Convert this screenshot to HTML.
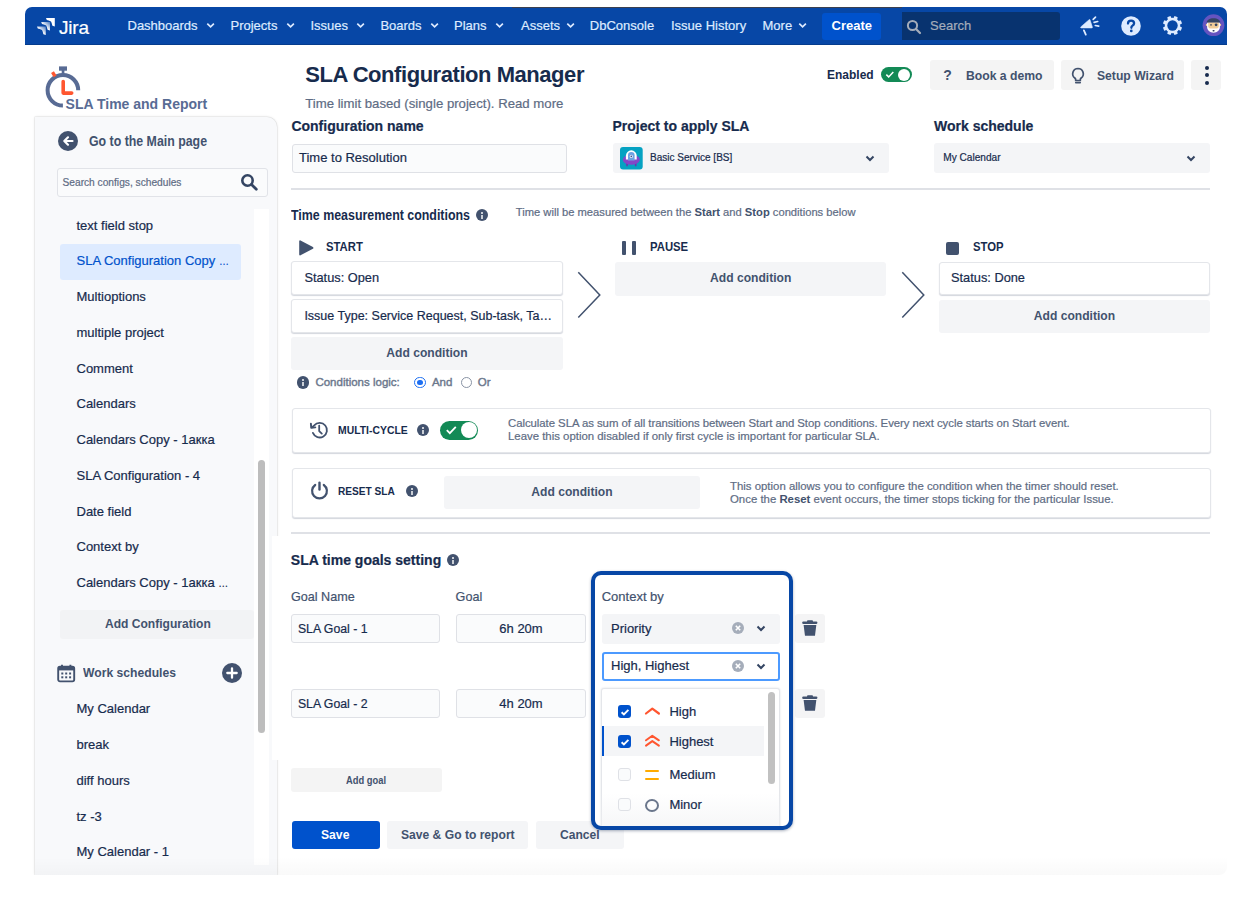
<!DOCTYPE html>
<html><head><meta charset="utf-8">
<style>
*{box-sizing:border-box;margin:0;padding:0}
html,body{width:1255px;height:901px;overflow:hidden;background:#fff}
body{position:relative;font-family:"Liberation Sans",sans-serif;color:#172B4D}
.a{position:absolute}
.t{position:absolute;line-height:1;white-space:nowrap;-webkit-text-stroke:.2px currentColor}
b,.t[style*="bold"]{-webkit-text-stroke:0}
.nav{color:#DEEBFF;font-size:13px;top:19.3px}
.chev{position:absolute;top:22px}
.si{font-size:13px;color:#172B4D;left:76.5px}
.btn{position:absolute;background:#F4F5F7;border-radius:3px}
.card{position:absolute;background:#fff;border:1px solid #E4E6EA;border-radius:3px;box-shadow:0 1px 1px rgba(9,30,66,.18)}
.lbl{font-weight:bold;font-size:14px;color:#172B4D}
.info{position:absolute;width:12px;height:12px;border-radius:50%;background:#42526E}
.info:after{content:"";position:absolute;left:5.3px;top:5.4px;width:1.6px;height:4px;background:rgba(255,255,255,.72)}
.info:before{content:"";position:absolute;left:5.3px;top:3px;width:1.6px;height:1.5px;background:rgba(255,255,255,.72)}
</style></head><body>

<!-- HEADER -->
<div class="a" style="left:25px;top:7px;width:1202px;height:38px;background:#0747A6;border-radius:7px 7px 0 0;box-shadow:inset 0 -1px 0 rgba(0,0,0,.15)"></div>
<div class="a" style="left:512px;top:7px;width:390px;height:1px;background:#3b4150"></div>
<svg class="a" style="left:34px;top:14px" width="24" height="24" viewBox="34 14 24 24">
  <defs><linearGradient id="jg" gradientUnits="objectBoundingBox" x1="1" y1="0" x2="0" y2="1"><stop offset="0" stop-color="#fff" stop-opacity=".25"/><stop offset=".55" stop-color="#fff" stop-opacity="1"/><stop offset="1" stop-color="#fff"/></linearGradient></defs>
  <path d="M46 18H54.8V26.5L52.4 25.7Q51.6 22.4 51 21.4Q48.5 20.6 46.8 20.1z" fill="#fff"/>
  <path d="M41.2 22H50V30.5L47.6 29.7Q46.8 26.4 46.2 25.4Q43.7 24.6 42 24.1z" fill="url(#jg)"/>
  <path d="M37 26.5H45.8V35L43.4 34.2Q42.6 30.9 42 29.9Q39.5 29.1 37.8 28.6z" fill="url(#jg)"/>
</svg>
<div class="t" style="left:59px;top:17.5px;font-size:19px;color:#fff;letter-spacing:-.2px">Jira</div>

<div class="t nav" style="left:127.5px">Dashboards</div>
<div class="t nav" style="left:230.5px">Projects</div>
<div class="t nav" style="left:310.4px">Issues</div>
<div class="t nav" style="left:380.4px">Boards</div>
<div class="t nav" style="left:454px">Plans</div>
<div class="t nav" style="left:521px">Assets</div>
<div class="t nav" style="left:589.8px">DbConsole</div>
<div class="t nav" style="left:671px">Issue History</div>
<div class="t nav" style="left:762.5px">More</div>
<svg class="chev" style="left:206px" width="9" height="7"><path d="M1.3 1.7l3.3 3.2 3.3-3.2" stroke="#DEEBFF" stroke-width="1.7" fill="none"/></svg>
<svg class="chev" style="left:285.5px" width="9" height="7"><path d="M1.3 1.7l3.3 3.2 3.3-3.2" stroke="#DEEBFF" stroke-width="1.7" fill="none"/></svg>
<svg class="chev" style="left:355.5px" width="9" height="7"><path d="M1.3 1.7l3.3 3.2 3.3-3.2" stroke="#DEEBFF" stroke-width="1.7" fill="none"/></svg>
<svg class="chev" style="left:429.5px" width="9" height="7"><path d="M1.3 1.7l3.3 3.2 3.3-3.2" stroke="#DEEBFF" stroke-width="1.7" fill="none"/></svg>
<svg class="chev" style="left:494.5px" width="9" height="7"><path d="M1.3 1.7l3.3 3.2 3.3-3.2" stroke="#DEEBFF" stroke-width="1.7" fill="none"/></svg>
<svg class="chev" style="left:565.5px" width="9" height="7"><path d="M1.3 1.7l3.3 3.2 3.3-3.2" stroke="#DEEBFF" stroke-width="1.7" fill="none"/></svg>
<svg class="chev" style="left:797.5px" width="9" height="7"><path d="M1.3 1.7l3.3 3.2 3.3-3.2" stroke="#DEEBFF" stroke-width="1.7" fill="none"/></svg>

<div class="a" style="left:822px;top:13px;width:59px;height:27px;background:#0052CC;border-radius:3px"></div>
<div class="t" style="left:831.5px;top:18.6px;font-size:13px;font-weight:bold;color:#fff">Create</div>
<div class="a" style="left:902px;top:12px;width:158px;height:28px;background:#08336F;border-radius:0 3px 3px 0"></div>
<svg class="a" style="left:906px;top:19px" width="16" height="16" viewBox="0 0 16 16"><circle cx="6.5" cy="6.5" r="4.6" stroke="#A5ADBA" stroke-width="2" fill="none"/><path d="M10 10l4 4" stroke="#A5ADBA" stroke-width="2.2" stroke-linecap="round"/></svg>
<div class="t" style="left:930px;top:19.3px;font-size:13px;color:#A5ADBA">Search</div>

<!-- megaphone -->
<svg class="a" style="left:1075px;top:12px" width="30" height="28" viewBox="1075 12 30 28">
  <path d="M1080.8 26.9L1089.3 19.6Q1089.8 19.2 1090 19.8L1092.4 27.2Q1092.5 27.9 1091.8 27.9H1081.2Q1080.2 27.6 1080.8 26.9z" fill="#DEEBFF" stroke="#DEEBFF" stroke-width=".6"/>
  <path d="M1083.9 30.4l1.9 4.2" stroke="#DEEBFF" stroke-width="1.8" stroke-linecap="round"/>
  <path d="M1093.2 19.4l2.3-2.3M1094.1 22.3l3.6-.8M1095.3 25.5l3.4.6" stroke="#DEEBFF" stroke-width="1.7" stroke-linecap="round"/>
</svg>
<!-- help -->
<svg class="a" style="left:1121px;top:16px" width="20" height="20" viewBox="0 0 20 20">
  <circle cx="10" cy="10" r="9.8" fill="#DEEBFF"/>
  <path d="M7 7.6c0-1.8 1.4-3 3.1-3s3 1.1 3 2.7c0 1.4-.9 2-1.8 2.6-.6.4-.9.7-.9 1.5v.4" stroke="#0747A6" stroke-width="2.3" fill="none" stroke-linecap="round"/>
  <circle cx="10.3" cy="14.9" r="1.35" fill="#0747A6"/>
</svg>
<!-- gear -->
<svg class="a" style="left:1161.9px;top:15.3px" width="21" height="21" viewBox="0 0 21 21">
  <g fill="#DEEBFF">
    <rect x="8.6" y="0.9" width="3.8" height="19.2" rx=".8" transform="rotate(22.5 10.5 10.5)"/>
    <rect x="8.6" y="0.9" width="3.8" height="19.2" rx=".8" transform="rotate(67.5 10.5 10.5)"/>
    <rect x="8.6" y="0.9" width="3.8" height="19.2" rx=".8" transform="rotate(112.5 10.5 10.5)"/>
    <rect x="8.6" y="0.9" width="3.8" height="19.2" rx=".8" transform="rotate(157.5 10.5 10.5)"/>
    <circle cx="10.5" cy="10.5" r="7.7"/>
  </g>
  <circle cx="10.5" cy="10.5" r="5.2" fill="#0747A6"/>
</svg>
<!-- avatar -->
<svg class="a" style="left:1202px;top:14px" width="23" height="23" viewBox="0 0 23 23">
  <circle cx="11.5" cy="11.2" r="10.9" fill="#6554C0"/>
  <circle cx="4.9" cy="10.9" r="1.1" fill="#F1CC98"/><circle cx="18.1" cy="10.9" r="1.1" fill="#F1CC98"/>
  <path d="M5.1 8.6h12.8v4.4c0 3.4-2.9 5.7-6.4 5.7s-6.4-2.3-6.4-5.7z" fill="#fff"/>
  <path d="M6.2 8.3h10.6v3.6c0 1.8-1.4 2.7-2.6 2.7h-5.4c-1.2 0-2.6-.9-2.6-2.7z" fill="#F1CC98"/>
  <path d="M4.6 8.6c0-2.5 3.1-4.4 6.9-4.4s6.9 1.9 6.9 4.4z" fill="#344563"/>
  <circle cx="9" cy="10.9" r=".8" fill="#344563"/>
  <circle cx="14.1" cy="10.8" r="1.4" fill="#344563"/>
  <rect x="10.6" y="15.9" width="1.9" height="1.5" rx=".4" fill="#344563"/>
</svg>

<!-- bottom faint shadow of main content -->


<!-- SIDEBAR -->
<svg class="a" style="left:44px;top:65px" width="40" height="45" viewBox="44 65 40 45">
  <path d="M78.2 90.3A15.3 15.3 0 1 0 62.9 105.6" stroke="#586B94" stroke-width="4" fill="none"/>
  <rect x="59" y="66.4" width="8" height="4.3" fill="#586B94"/>
  <rect x="61.7" y="70" width="2.7" height="4" fill="#586B94"/>
  <path d="M52.5 72.2l2.6 4.2" stroke="#FF5630" stroke-width="3.4"/>
  <path d="M63.2 81.5v11.6h8.5" stroke="#FF5630" stroke-width="3.6" fill="none" stroke-linecap="round" stroke-linejoin="round"/>
</svg>
<div class="t" style="left:65.6px;top:97.2px;font-size:14px;font-weight:bold;color:#586B94">SLA Time and Report</div>

<div class="a" style="left:35.3px;top:116.7px;width:242px;height:758.3px;background:#F8F9FB;border-radius:0 10px 0 0;box-shadow:0 0 0 .6px rgba(0,0,0,.07),0 0 3px rgba(0,0,0,.12)"></div>
<div class="a" style="left:58px;top:130.5px;width:20px;height:20px;border-radius:50%;background:#42526E"></div>
<svg class="a" style="left:58px;top:130.5px" width="20" height="20" viewBox="0 0 20 20"><path d="M14.5 10H6.5M10 6.3L6.3 10l3.7 3.7" stroke="#fff" stroke-width="2.2" fill="none" stroke-linecap="round" stroke-linejoin="round"/></svg>
<div class="t" style="left:89px;top:133.9px;font-size:14px;font-weight:bold;color:#42526E;transform:scaleX(.882);transform-origin:0 0">Go to the Main page</div>

<div class="a" style="left:57.3px;top:168px;width:211px;height:28.5px;background:#FAFBFC;border:1px solid #E1E3E8;border-radius:3px"></div>
<div class="t" style="left:62.5px;top:178.3px;font-size:10.2px;color:#5E6C84">Search configs, schedules</div>
<svg class="a" style="left:240px;top:173px" width="19" height="18" viewBox="0 0 19 18"><circle cx="7.5" cy="7.5" r="5.2" stroke="#344563" stroke-width="2.6" fill="none"/><path d="M11.5 11.5l4.8 4.8" stroke="#344563" stroke-width="2.8" stroke-linecap="round"/></svg>

<div class="a" style="left:254px;top:209px;width:15px;height:656px;background:#fff"></div>
<div class="a" style="left:258px;top:459.6px;width:7px;height:273px;background:#BDBDBD;border-radius:3.5px"></div>

<div class="a" style="left:60px;top:244.4px;width:181px;height:35.5px;background:#DEEBFF;border-radius:3px"></div>
<div class="t si" style="top:218.5px">text field stop</div>
<div class="t si" style="top:254.3px;color:#0052CC">SLA Configuration Copy <span style="font-size:10px;letter-spacing:-.5px">…</span></div>
<div class="t si" style="top:290.0px">Multioptions</div>
<div class="t si" style="top:325.8px">multiple project</div>
<div class="t si" style="top:361.6px">Comment</div>
<div class="t si" style="top:397.4px">Calendars</div>
<div class="t si" style="top:433.1px">Calendars Copy - 1акка</div>
<div class="t si" style="top:468.9px">SLA Configuration - 4</div>
<div class="t si" style="top:504.7px">Date field</div>
<div class="t si" style="top:540.4px">Context by</div>
<div class="t si" style="top:576.2px">Calendars Copy - 1акка <span style="font-size:10px;letter-spacing:-.5px">…</span></div>

<div class="btn" style="left:59.7px;top:609.7px;width:194px;height:29px;background:#F2F3F5;border-radius:3px"></div>
<div class="t" style="left:105px;top:617.4px;font-size:13.7px;font-weight:bold;color:#42526E;transform:scaleX(.881);transform-origin:0 0">Add Configuration</div>

<svg class="a" style="left:57px;top:664px" width="19" height="19" viewBox="0 0 19 19">
  <rect x="1.2" y="2.8" width="16" height="14.6" rx="1.8" stroke="#42526E" stroke-width="1.9" fill="none"/>
  <rect x="1.2" y="2.8" width="16" height="3.6" fill="#42526E"/>
  <path d="M5 0.8v3.5M13.4 0.8v3.5" stroke="#42526E" stroke-width="1.9"/>
  <g fill="#42526E"><rect x="4.3" y="8.5" width="2" height="2"/><rect x="8.2" y="8.5" width="2" height="2"/><rect x="12.1" y="8.5" width="2" height="2"/><rect x="4.3" y="12.3" width="2" height="2"/><rect x="8.2" y="12.3" width="2" height="2"/><rect x="12.1" y="12.3" width="2" height="2"/></g>
</svg>
<div class="t" style="left:83.3px;top:666.3px;font-size:13px;font-weight:bold;color:#42526E;transform:scaleX(.935);transform-origin:0 0">Work schedules</div>
<div class="a" style="left:222.4px;top:662.5px;width:20px;height:20px;border-radius:50%;background:#42526E"></div>
<svg class="a" style="left:222.4px;top:662.5px" width="20" height="20" viewBox="0 0 20 20"><path d="M10 5.3v9.4M5.3 10h9.4" stroke="#fff" stroke-width="2.3" stroke-linecap="round"/></svg>

<div class="t si" style="top:702.3px">My Calendar</div>
<div class="t si" style="top:738.0px">break</div>
<div class="t si" style="top:773.8px">diff hours</div>
<div class="t si" style="top:809.5px">tz -3</div>
<div class="t si" style="top:845.3px">My Calendar - 1</div>

<div class="a" style="left:271.5px;top:536px;width:30px;height:224px;background:#fff"></div>


<!-- MAIN -->
<div class="t" style="left:305.2px;top:64.4px;font-size:22px;font-weight:bold;color:#172B4D;letter-spacing:-.45px">SLA Configuration Manager</div>
<div class="t" style="left:305.2px;top:96.9px;font-size:13.2px;color:#5E6C84">Time limit based (single project). Read more</div>

<div class="t" style="left:827.2px;top:67.9px;font-size:13.7px;font-weight:bold;color:#172B4D;transform:scaleX(.876);transform-origin:0 0">Enabled</div>
<div class="a" style="left:881.4px;top:67.2px;width:30.2px;height:15px;border-radius:7.5px;background:#138A56"></div>
<div class="a" style="left:898.2px;top:68.6px;width:12px;height:12px;border-radius:50%;background:#fff"></div>
<svg class="a" style="left:885px;top:70px" width="10" height="9" viewBox="0 0 10 9"><path d="M1.3 4.6l2.4 2.3 4.6-4.9" stroke="#fff" stroke-width="1.5" fill="none"/></svg>

<div class="btn" style="left:930.4px;top:60px;width:123.2px;height:30px;background:#F4F4F4"></div>
<div class="t" style="left:943.3px;top:68px;font-size:14px;font-weight:bold;color:#42526E">?</div>
<div class="t" style="left:966.4px;top:68.6px;font-size:13.2px;font-weight:bold;color:#42526E;transform:scaleX(.924);transform-origin:0 0">Book a demo</div>
<div class="btn" style="left:1061px;top:60px;width:122.6px;height:30px;background:#F4F4F4"></div>
<svg class="a" style="left:1069.5px;top:66.8px" width="16" height="18" viewBox="0 0 16 18"><path d="M8 1.5a5.3 5.3 0 0 0-3.2 9.5c.6.5.9 1.1.9 1.8v.7h4.6v-.7c0-.7.3-1.3.9-1.8A5.3 5.3 0 0 0 8 1.5z" stroke="#42526E" stroke-width="1.7" fill="none"/><path d="M5.8 15.6h4.4" stroke="#42526E" stroke-width="1.7" stroke-linecap="round"/></svg>
<div class="t" style="left:1096.7px;top:68.6px;font-size:13.2px;font-weight:bold;color:#42526E;transform:scaleX(.922);transform-origin:0 0">Setup Wizard</div>
<div class="btn" style="left:1191.4px;top:60px;width:30px;height:30px;background:#F4F4F4"></div>
<div class="a" style="left:1204.5px;top:66px;width:4px;height:4px;border-radius:50%;background:#172B4D"></div>
<div class="a" style="left:1204.5px;top:73px;width:4px;height:4px;border-radius:50%;background:#172B4D"></div>
<div class="a" style="left:1204.5px;top:80.5px;width:4px;height:4px;border-radius:50%;background:#172B4D"></div>

<div class="t lbl" style="left:291.4px;top:118.8px">Configuration name</div>
<div class="t lbl" style="left:612.5px;top:118.8px">Project to apply SLA</div>
<div class="t lbl" style="left:934px;top:118.8px">Work schedule</div>

<div class="a" style="left:291.6px;top:143.5px;width:275px;height:29.2px;background:#FAFBFC;border:1px solid #DFE1E6;border-radius:3px"></div>
<div class="t" style="left:299px;top:151.4px;font-size:13px;color:#172B4D">Time to Resolution</div>

<div class="btn" style="left:612.5px;top:143px;width:276.3px;height:29.6px"></div>
<svg class="a" style="left:620px;top:146.7px" width="23" height="23" viewBox="0 0 23 23">
  <rect width="22.7" height="22.6" rx="3" fill="#05A2C2"/>
  <ellipse cx="11.3" cy="12.6" rx="8.4" ry="5" fill="#8649C9"/>
  <rect x="6.2" y="16" width="1.6" height="3.2" rx=".5" fill="#6A34B0"/><rect x="14.9" y="16" width="1.6" height="3.2" rx=".5" fill="#6A34B0"/>
  <path d="M5.9 12.6V8.7a5.4 5.4 0 0 1 10.8 0v3.9z" fill="#fff"/>
  <path d="M8 13.5V8.3a3.3 3.3 0 0 1 6.6 0v5.2z" fill="#6CA2E2"/>
  <circle cx="11.3" cy="9.4" r="1.6" fill="#E6ECF8"/><circle cx="11.3" cy="9.4" r=".8" fill="#3B4C8C"/>
  <path d="M2.9 12.6a8.4 5 0 0 0 16.8 0c-1.6 1.4-4.9 1.8-8.4 1.8s-6.8-.4-8.4-1.8z" fill="#8246C8"/>
</svg>
<div class="t" style="left:650px;top:152.5px;font-size:10px;color:#172B4D">Basic Service [BS]</div>
<svg class="a" style="left:865px;top:155px" width="10" height="7"><path d="M1.5 1.5l3.5 3.5 3.5-3.5" stroke="#344563" stroke-width="2" fill="none"/></svg>

<div class="btn" style="left:934px;top:143px;width:275.7px;height:29.6px"></div>
<div class="t" style="left:943.3px;top:152.5px;font-size:10.1px;color:#172B4D">My Calendar</div>
<svg class="a" style="left:1186px;top:155px" width="10" height="7"><path d="M1.5 1.5l3.5 3.5 3.5-3.5" stroke="#344563" stroke-width="2" fill="none"/></svg>

<div class="a" style="left:291px;top:188px;width:919px;height:2px;background:#DFE1E6"></div>

<div class="t" style="left:291.4px;top:207.7px;font-size:14px;font-weight:bold;color:#172B4D;transform:scaleX(.886);transform-origin:0 0">Time measurement conditions</div>
<div class="info" style="left:475.8px;top:209.3px"></div>
<div class="t" style="left:515.8px;top:207.2px;font-size:11.2px;color:#5E6C84">Time will be measured between the <b style="color:#42526E">Start</b> and <b style="color:#42526E">Stop</b> conditions below</div>

<svg class="a" style="left:299px;top:240px" width="15" height="16" viewBox="0 0 15 16"><path d="M1.1 1.2v13.3l12.4-6.6z" fill="#42526E" stroke="#42526E" stroke-width="1.8" stroke-linejoin="round"/></svg>
<div class="t" style="left:326px;top:241.2px;font-size:12.3px;font-weight:bold;color:#172B4D;transform:scaleX(.92);transform-origin:0 0">START</div>
<div class="a" style="left:622px;top:240.6px;width:3.6px;height:14.7px;background:#42526E;border-radius:1px"></div>
<div class="a" style="left:632px;top:240.6px;width:3.6px;height:14.7px;background:#42526E;border-radius:1px"></div>
<div class="t" style="left:649.7px;top:241.2px;font-size:12.3px;font-weight:bold;color:#172B4D;transform:scaleX(.92);transform-origin:0 0">PAUSE</div>
<div class="a" style="left:946px;top:241.5px;width:13px;height:13px;background:#42526E;border-radius:2px"></div>
<div class="t" style="left:973.2px;top:241.2px;font-size:12.3px;font-weight:bold;color:#172B4D;transform:scaleX(.92);transform-origin:0 0">STOP</div>

<div class="card" style="left:290.8px;top:261.4px;width:272.6px;height:33.8px"></div>
<div class="t" style="left:304.4px;top:271.8px;font-size:12.8px;color:#172B4D">Status: Open</div>
<div class="card" style="left:290.8px;top:299.3px;width:272.6px;height:33.3px"></div>
<div class="t" style="left:304.4px;top:309.6px;font-size:12.5px;color:#172B4D">Issue Type: Service Request, Sub-task, Ta…</div>
<div class="btn" style="left:291px;top:337.2px;width:272px;height:33.1px"></div>
<div class="t" style="left:291px;width:272px;text-align:center;top:347.1px;font-size:12.4px;font-weight:bold;color:#42526E;transform:scaleX(.976)">Add condition</div>

<svg class="a" style="left:576px;top:270px" width="26" height="50" viewBox="0 0 26 50"><path d="M2.3 2.2l21.5 22.7L2.3 47.5" stroke="#42526E" stroke-width="1.5" fill="none"/></svg>
<svg class="a" style="left:899.5px;top:269.5px" width="26" height="50" viewBox="0 0 26 50"><path d="M2.3 2.2l21.5 22.7L2.3 47.5" stroke="#42526E" stroke-width="1.5" fill="none"/></svg>

<div class="btn" style="left:615px;top:261.6px;width:271.4px;height:34px"></div>
<div class="t" style="left:615px;width:271.4px;text-align:center;top:272.2px;font-size:12.4px;font-weight:bold;color:#42526E;transform:scaleX(.976)">Add condition</div>

<div class="card" style="left:938.8px;top:261.5px;width:271.1px;height:33.9px"></div>
<div class="t" style="left:951px;top:271.7px;font-size:12.8px;color:#172B4D">Status: Done</div>
<div class="btn" style="left:938.8px;top:299.7px;width:271px;height:33px"></div>
<div class="t" style="left:938.8px;width:271px;text-align:center;top:309.9px;font-size:12.4px;font-weight:bold;color:#42526E;transform:scaleX(.976)">Add condition</div>

<div class="info" style="left:296.8px;top:376.3px;width:12.4px;height:12.4px"></div>
<div class="t" style="left:315.4px;top:377.3px;font-size:11.5px;color:#6B778C;-webkit-text-stroke:.4px #6B778C">Conditions logic:</div>
<div class="a" style="left:414.3px;top:376.6px;width:11.8px;height:11.8px;border-radius:50%;background:#fff;border:1.6px solid #1D6FF2"></div><div class="a" style="left:417.3px;top:379.6px;width:5.8px;height:5.8px;border-radius:50%;background:#1D6FF2"></div>
<div class="t" style="left:431.9px;top:377.3px;font-size:11.5px;color:#6B778C;-webkit-text-stroke:.4px #6B778C">And</div>
<div class="a" style="left:460.6px;top:376.6px;width:11.8px;height:11.8px;border-radius:50%;background:#fff;border:1.2px solid #8993A4"></div>
<div class="t" style="left:477.7px;top:377.3px;font-size:11.5px;color:#6B778C;-webkit-text-stroke:.4px #6B778C">Or</div>

<!-- MULTI-CYCLE -->
<div class="card" style="left:291.6px;top:408px;width:919px;height:45px"></div>
<svg class="a" style="left:308.8px;top:420px" width="20" height="20" viewBox="0 0 20 20">
  <path d="M3.9 12.9A7.3 7.3 0 1 0 5.2 5.3L3 7.3" stroke="#42526E" stroke-width="1.8" fill="none" stroke-linecap="round"/>
  <path d="M1.9 3.6L2.2 7.7L6.3 7.4" stroke="#42526E" stroke-width="1.9" fill="none" stroke-linecap="round" stroke-linejoin="round"/>
  <path d="M10.2 5.6v5.5l2.6 2.5" stroke="#42526E" stroke-width="1.8" fill="none" stroke-linecap="round" stroke-linejoin="round"/>
</svg>
<div class="t" style="left:338.2px;top:424.8px;font-size:11.2px;font-weight:bold;color:#172B4D;transform:scaleX(.93);transform-origin:0 0">MULTI-CYCLE</div>
<div class="info" style="left:417px;top:424.2px"></div>
<div class="a" style="left:440px;top:420.8px;width:38px;height:19px;border-radius:9.5px;background:#138A56"></div>
<div class="a" style="left:461px;top:422.3px;width:16px;height:16px;border-radius:50%;background:#fff"></div>
<svg class="a" style="left:445px;top:424px" width="13" height="12" viewBox="0 0 13 12"><path d="M1.8 6.2l3 2.9 6-6.3" stroke="#fff" stroke-width="1.8" fill="none"/></svg>
<div class="t" style="left:508px;top:416.9px;font-size:11.4px;color:#5E6C84;line-height:12.7px"><span style="letter-spacing:-.055px">Calculate SLA as sum of all transitions between Start and Stop conditions. Every next cycle starts on Start event.</span><br>Leave this option disabled if only first cycle is important for particular SLA.</div>

<!-- RESET SLA -->
<div class="card" style="left:291.6px;top:468px;width:919px;height:49.7px"></div>
<svg class="a" style="left:310px;top:480.7px" width="20" height="20" viewBox="0 0 20 20">
  <path d="M5.2 4A7.4 7.4 0 1 0 13.8 4" stroke="#42526E" stroke-width="2.2" fill="none" stroke-linecap="round"/>
  <path d="M9.5 1.8v6.8" stroke="#42526E" stroke-width="2.4" stroke-linecap="round"/>
</svg>
<div class="t" style="left:337.9px;top:486.2px;font-size:11.2px;font-weight:bold;color:#172B4D;transform:scaleX(.905);transform-origin:0 0">RESET SLA</div>
<div class="info" style="left:406.2px;top:485.4px"></div>
<div class="btn" style="left:444px;top:475.6px;width:256px;height:33.4px"></div>
<div class="t" style="left:444px;width:256px;text-align:center;top:486.2px;font-size:12.4px;font-weight:bold;color:#42526E;transform:scaleX(.976)">Add condition</div>
<div class="t" style="left:730px;top:480.1px;font-size:11.4px;color:#5E6C84;line-height:12.9px">This option allows you to configure the condition when the timer should reset.<br>Once the <b style="color:#42526E">Reset</b> event occurs, the timer stops ticking for the particular Issue.</div>

<div class="a" style="left:291px;top:532px;width:919px;height:2px;background:#DFE1E6"></div>

<!-- GOALS -->
<div class="t lbl" style="left:290.8px;top:552.6px">SLA time goals setting</div>
<div class="info" style="left:446.9px;top:554.3px"></div>
<div class="t" style="left:291px;top:591.1px;font-size:12.6px;color:#42526E">Goal Name</div>
<div class="t" style="left:455.6px;top:591.1px;font-size:12.6px;color:#42526E">Goal</div>

<div class="a" style="left:290.8px;top:614px;width:149.6px;height:29px;background:#FAFBFC;border:1px solid #DFE1E6;border-radius:3px"></div>
<div class="t" style="left:297.9px;top:622.5px;font-size:12.3px;color:#172B4D">SLA Goal - 1</div>
<div class="a" style="left:456px;top:614px;width:130px;height:29px;background:#FAFBFC;border:1px solid #DFE1E6;border-radius:3px"></div>
<div class="t" style="left:456px;width:130px;text-align:center;top:622.1px;font-size:13px;color:#172B4D">6h 20m</div>
<div class="a" style="left:290.8px;top:689px;width:149.6px;height:29px;background:#FAFBFC;border:1px solid #DFE1E6;border-radius:3px"></div>
<div class="t" style="left:297.9px;top:697.5px;font-size:12.3px;color:#172B4D">SLA Goal - 2</div>
<div class="a" style="left:456px;top:689px;width:130px;height:29px;background:#FAFBFC;border:1px solid #DFE1E6;border-radius:3px"></div>
<div class="t" style="left:456px;width:130px;text-align:center;top:697.1px;font-size:13px;color:#172B4D">4h 20m</div>

<div class="btn" style="left:795.3px;top:613.6px;width:29.5px;height:29.7px;background:#F4F4F5"></div>
<svg class="a" style="left:802px;top:620px" width="16" height="17" viewBox="0 0 16 17"><rect x=".2" y="1.4" width="15.2" height="2.6" rx="1.2" fill="#42526E"/><rect x="5" y=".2" width="6" height="2.4" rx="1" fill="#42526E"/><path d="M1.6 5h12.7l-1.3 10.8H3z" fill="#42526E"/></svg>
<div class="btn" style="left:795.3px;top:688.5px;width:29.5px;height:29.7px;background:#F4F4F5"></div>
<svg class="a" style="left:802px;top:695px" width="16" height="17" viewBox="0 0 16 17"><rect x=".2" y="1.4" width="15.2" height="2.6" rx="1.2" fill="#42526E"/><rect x="5" y=".2" width="6" height="2.4" rx="1" fill="#42526E"/><path d="M1.6 5h12.7l-1.3 10.8H3z" fill="#42526E"/></svg>

<div class="btn" style="left:291.3px;top:768.2px;width:150.5px;height:23.8px;background:#F4F4F4"></div>
<div class="t" style="left:346.1px;top:774.7px;font-size:10.5px;font-weight:bold;color:#42526E;transform:scaleX(.89);transform-origin:0 0">Add goal</div>

<div class="a" style="left:291.5px;top:820.8px;width:88px;height:28px;background:#0052CC;border-radius:3px"></div>
<div class="t" style="left:321px;top:827.6px;font-size:13.7px;font-weight:bold;color:#fff;transform:scaleX(.888);transform-origin:0 0">Save</div>
<div class="btn" style="left:387.3px;top:820.8px;width:140.8px;height:28px"></div>
<div class="t" style="left:400.8px;top:827.6px;font-size:13.7px;font-weight:bold;color:#42526E;transform:scaleX(.884);transform-origin:0 0">Save &amp; Go to report</div>
<div class="btn" style="left:536.2px;top:820.8px;width:88px;height:28px"></div>
<div class="t" style="left:559.7px;top:827.6px;font-size:13.7px;font-weight:bold;color:#42526E;transform:scaleX(.882);transform-origin:0 0">Cancel</div>

<!-- POPOVER -->
<div class="a" style="left:591px;top:571px;width:202px;height:258.6px;background:#fff;border:4px solid #0747A6;border-radius:10px;box-shadow:0 1px 3px rgba(9,30,66,.35);overflow:hidden">
  <div class="a" style="left:6.4px;top:112.6px;width:178.7px;height:150px;background:#fff;border:1px solid #E4E6EA;border-radius:3px;box-shadow:0 0 2px rgba(9,30,66,.15)"></div>
  <div class="a" style="left:7px;top:150.8px;width:162.4px;height:29.9px;background:#F4F5F7;border-left:2px solid #0052CC"></div>
  <div class="a" style="left:173.4px;top:117px;width:7px;height:91.5px;background:#C1C1C1;border-radius:3.5px"></div>
  <div class="a" style="left:6px;top:218px;width:180px;height:40px;background:linear-gradient(rgba(255,255,255,0),rgba(240,241,243,.7))"></div>
</div>
<div class="t" style="left:601.7px;top:590px;font-size:13px;color:#42526E">Context by</div>
<div class="btn" style="left:601.9px;top:614.2px;width:178px;height:29.6px"></div>
<div class="t" style="left:611px;top:622px;font-size:13px;color:#172B4D">Priority</div>
<svg class="a" style="left:732.4px;top:622.3px" width="12" height="12" viewBox="0 0 12 12"><circle cx="6" cy="6" r="6" fill="#A5ADBA"/><path d="M3.8 3.8l4.4 4.4M8.2 3.8l-4.4 4.4" stroke="#fff" stroke-width="1.6"/></svg>
<svg class="a" style="left:755.8px;top:625px" width="10" height="7"><path d="M1.5 1.5l3.5 3.5 3.5-3.5" stroke="#344563" stroke-width="2" fill="none"/></svg>

<div class="a" style="left:601.7px;top:651.6px;width:178px;height:29.4px;background:#fff;border:2px solid #4C9AFF;border-radius:3px"></div>
<div class="t" style="left:611px;top:659.3px;font-size:13px;color:#172B4D">High, Highest</div>
<svg class="a" style="left:732.4px;top:660px" width="12" height="12" viewBox="0 0 12 12"><circle cx="6" cy="6" r="6" fill="#A5ADBA"/><path d="M3.8 3.8l4.4 4.4M8.2 3.8l-4.4 4.4" stroke="#fff" stroke-width="1.6"/></svg>
<svg class="a" style="left:755.8px;top:663px" width="10" height="7"><path d="M1.5 1.5l3.5 3.5 3.5-3.5" stroke="#344563" stroke-width="2" fill="none"/></svg>

<div class="a" style="left:617.5px;top:704.5px;width:13.7px;height:13.5px;background:#0052CC;border-radius:3px"></div>
<svg class="a" style="left:617.5px;top:704.5px" width="14" height="14" viewBox="0 0 14 14"><path d="M3.6 7.2l2.3 2.2 4.5-4.6" stroke="#fff" stroke-width="1.9" fill="none"/></svg>
<svg class="a" style="left:644px;top:706px" width="17" height="10" viewBox="0 0 17 10"><path d="M2 7.5l6.3-4.8 6.6 4.8" stroke="#FF5630" stroke-width="2.2" fill="none" stroke-linecap="round" stroke-linejoin="round"/></svg>
<div class="t" style="left:669.4px;top:705px;font-size:13px;color:#172B4D">High</div>

<div class="a" style="left:617.5px;top:734.5px;width:13.7px;height:13.5px;background:#0052CC;border-radius:3px"></div>
<svg class="a" style="left:617.5px;top:734.5px" width="14" height="14" viewBox="0 0 14 14"><path d="M3.6 7.2l2.3 2.2 4.5-4.6" stroke="#FF5630" stroke-width="0" fill="none"/><path d="M3.6 7.2l2.3 2.2 4.5-4.6" stroke="#fff" stroke-width="1.9" fill="none"/></svg>
<svg class="a" style="left:644px;top:734px" width="17" height="14" viewBox="0 0 17 14"><path d="M2 6.3l6.3-4.5 6.6 4.5M2 11.6l6.3-4.5 6.6 4.5" stroke="#FF5630" stroke-width="2" fill="none" stroke-linecap="round" stroke-linejoin="round"/></svg>
<div class="t" style="left:669.4px;top:735px;font-size:13px;color:#172B4D">Highest</div>

<div class="a" style="left:617.5px;top:768.2px;width:13.7px;height:13px;background:#FAFBFC;border:1.5px solid #DFE1E6;border-radius:3px"></div>
<div class="a" style="left:645px;top:770px;width:14.2px;height:2.3px;background:#FFAB00;border-radius:1px"></div>
<div class="a" style="left:645px;top:777.5px;width:14.2px;height:2.3px;background:#FFAB00;border-radius:1px"></div>
<div class="t" style="left:669.4px;top:768px;font-size:13px;color:#172B4D">Medium</div>

<div class="a" style="left:617.5px;top:798.3px;width:13.7px;height:13px;background:#FAFBFC;border:1.5px solid #DFE1E6;border-radius:3px"></div>
<div class="a" style="left:645px;top:798.5px;width:14px;height:13.2px;border:2.2px solid #6B778C;border-radius:50%"></div>
<div class="t" style="left:669.4px;top:797.7px;font-size:13px;color:#172B4D">Minor</div>


<div class="a" style="left:35px;top:856.5px;width:1192px;height:18.5px;background:linear-gradient(rgba(0,0,0,0),rgba(0,0,0,.025));border-radius:0 0 8px 0"></div>
<div class="a" style="left:0;top:875px;width:1255px;height:26px;background:#fff"></div>
</body></html>
